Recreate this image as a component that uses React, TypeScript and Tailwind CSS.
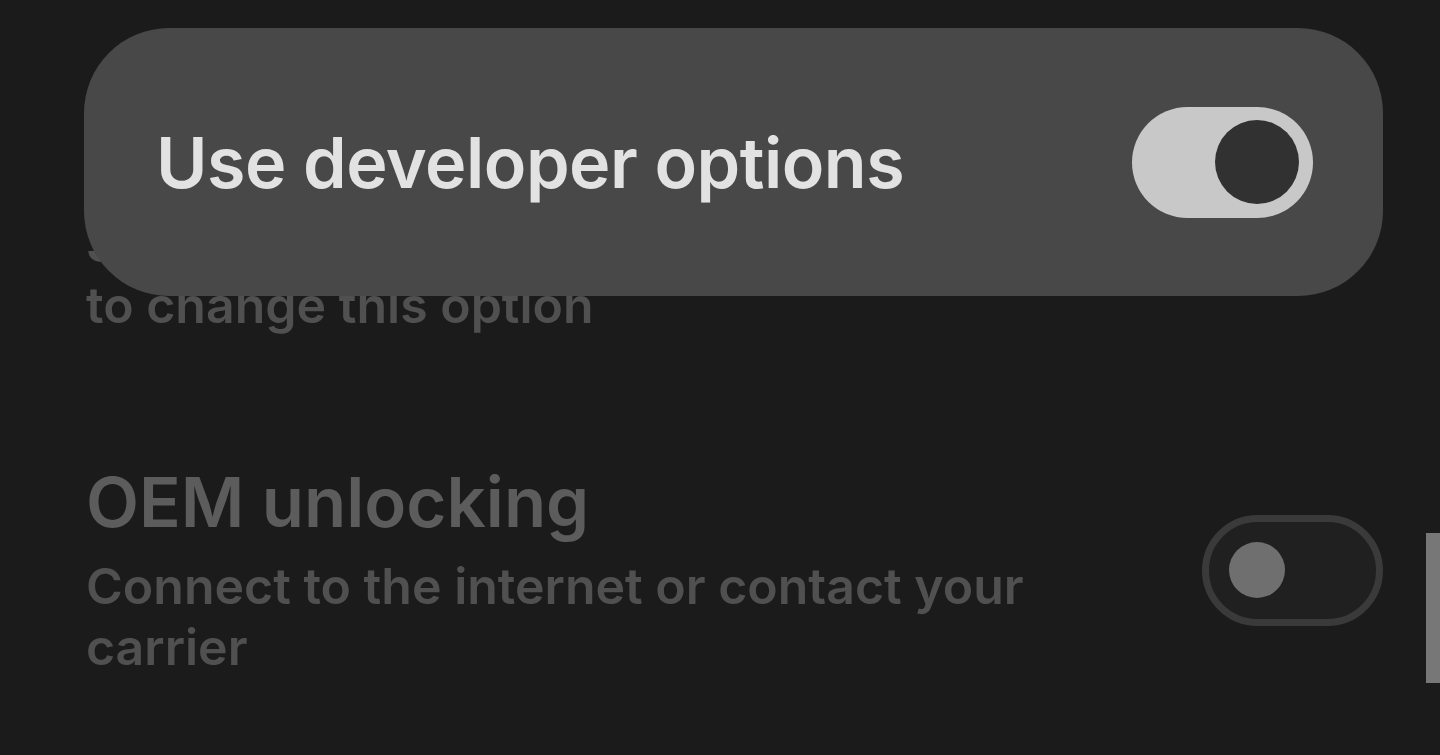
import React from "react";

export default function App() {
  const font = { fontFamily: "Inter, 'Noto Sans', sans-serif" };
  return (
    <div className="relative w-[1440px] h-[755px] overflow-hidden bg-[#1b1b1b]" style={font}>
      {/* background list */}
      <div className="flex flex-col pl-[86px] pr-[57px] pt-[214px]">
        <div className="text-[50px] leading-[61px] font-semibold text-[#505050]">
          <div className="whitespace-nowrap">Settings aren't available for this user. Ask the admin</div>
          <div>to change this option</div>
        </div>
        <div className="flex items-center justify-between mt-[126px]">
          <div className="flex flex-col">
            <div className="text-[69px] leading-[80px] font-semibold text-[#5c5c5c] mb-[14px]">OEM unlocking</div>
            <div className="text-[50px] leading-[61px] font-semibold text-[#505050] w-[960px]">
              Connect to the internet or contact your carrier
            </div>
          </div>
          <div className="w-[181px] h-[111px] rounded-full border-[7px] border-[#3a3a3a] bg-[#202020] flex items-center pl-[20px]">
            <div className="w-[56px] h-[56px] rounded-full bg-[#6f6f6f]" />
          </div>
        </div>
      </div>
      {/* scrollbar */}
      <div className="absolute right-0 top-[533px] w-[14px] h-[150px] bg-[#777777]" />
      {/* overlay card */}
      <div className="absolute left-[84px] top-[28px] w-[1299px] h-[268px] rounded-[85px] bg-[#484848] flex items-center justify-between pl-[72px] pr-[70px]">
        <div className="text-[70px] font-semibold text-[#e2e2e2] tracking-[-0.5px]">Use developer options</div>
        <div className="w-[181px] h-[111px] rounded-full bg-[#c8c8c8] flex items-center justify-end pr-[14px]">
          <div className="w-[84px] h-[84px] rounded-full bg-[#313131]" />
        </div>
      </div>
    </div>
  );
}
